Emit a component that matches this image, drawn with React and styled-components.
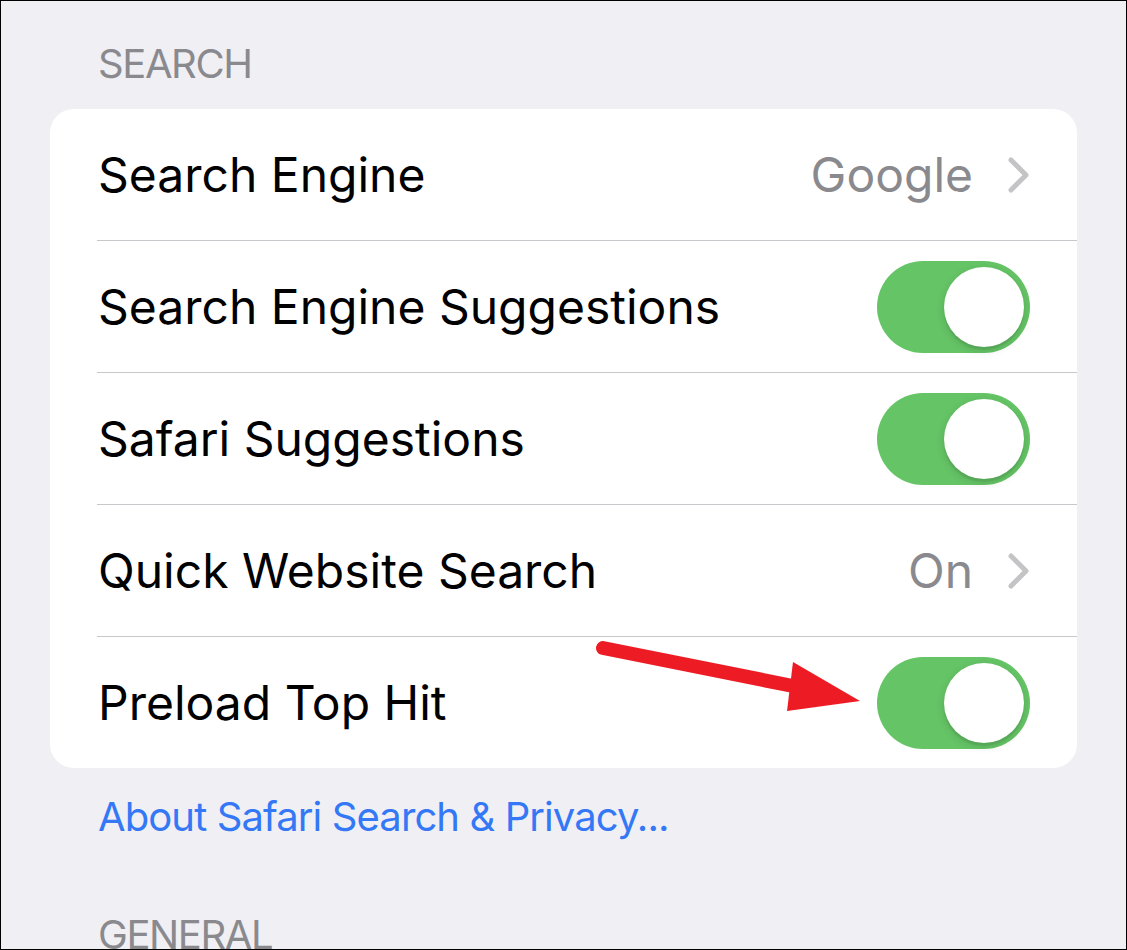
import React from 'react';
import styled, { createGlobalStyle } from 'styled-components';

const GlobalStyle = createGlobalStyle`
  body {
    margin: 0;
    background: #fff;
    font-family: Inter, "Noto Sans", sans-serif;
  }
`;

const rows = [
  { label: 'Search Engine', value: 'Google' },
  { label: 'Search Engine Suggestions', toggle: true },
  { label: 'Safari Suggestions', toggle: true },
  { label: 'Quick Website Search', value: 'On' },
  { label: 'Preload Top Hit', toggle: true },
];

const App = () => {
  return (
    <>
      <GlobalStyle />
      <Frame>
        <SectionHeader>SEARCH</SectionHeader>
        <Card>
          {rows.map((row, i) => (
            <Row key={row.label}>
              <RowInner last={i === rows.length - 1}>
                <Label>{row.label}</Label>
                {row.toggle ? (
                  <Switch>
                    <Knob />
                  </Switch>
                ) : (
                  <Detail>
                    <Value>{row.value}</Value>
                    <Chevron />
                  </Detail>
                )}
              </RowInner>
            </Row>
          ))}
        </Card>
        <FooterLink>About Safari Search &amp; Privacy...</FooterLink>
        <SectionHeader next>GENERAL</SectionHeader>

        {/* annotation arrow pointing at the last toggle */}
        <Annotation viewBox="0 0 1127 950">
          <line x1="603" y1="648" x2="798" y2="687" stroke="#ed1c24" strokeWidth="14" strokeLinecap="round" />
          <polygon points="793,662 860,701 787,711" fill="#ed1c24" />
        </Annotation>
      </Frame>
    </>
  );
};

export default App;

const Chevron = () => (
  <svg width="24" height="38" viewBox="0 0 24 38">
    <polyline points="5,4 20,19 5,34" fill="none" stroke="#c4c4c7" strokeWidth="5" strokeLinecap="round" strokeLinejoin="round" />
  </svg>
);

const Frame = styled.div`
  position: relative;
  width: 1127px;
  height: 950px;
  box-sizing: border-box;
  border: 1px solid #000;
  background: #f0eff4;
  padding: 0 49px;
  overflow: hidden;
`;

const SectionHeader = styled.div`
  padding: ${p => (p.next ? '70px' : '39px')} 0 21px 48px;
  font-size: 40px;
  line-height: 48px;
  letter-spacing: -1.4px;
  color: #8a8a8e;
`;

const Card = styled.div`
  background: #fff;
  border-radius: 24px;
  overflow: hidden;
`;

const Row = styled.div`
  padding-left: 47px;
`;

const RowInner = styled.div`
  height: 131px;
  display: flex;
  align-items: center;
  justify-content: space-between;
  padding-right: 47px;
  border-bottom: ${p => (p.last ? 'none' : '1px solid #c8c7cc')};
`;

const Label = styled.span`
  font-size: 48px;
  color: #000;
  padding-left: 1px;
`;

const Detail = styled.div`
  display: flex;
  align-items: center;
  gap: 33px;
`;

const Value = styled.span`
  font-size: 48px;
  color: #8a8a8e;
`;

const Switch = styled.div`
  width: 153px;
  height: 92px;
  border-radius: 46px;
  background: #65c466;
  display: flex;
  align-items: center;
  justify-content: flex-end;
  padding-right: 6px;
  box-sizing: border-box;
`;

const Knob = styled.div`
  width: 80px;
  height: 80px;
  border-radius: 50%;
  background: #fff;
  box-shadow: 0 3px 8px rgba(0, 0, 0, 0.15), 0 3px 1px rgba(0, 0, 0, 0.06);
`;

const FooterLink = styled.div`
  margin-top: 25px;
  padding-left: 48px;
  font-size: 40px;
  line-height: 48px;
  letter-spacing: -0.9px;
  color: #3478f6;
`;

const Annotation = styled.svg`
  position: absolute;
  left: -1px;
  top: -1px;
  width: 1127px;
  height: 950px;
  pointer-events: none;
`;
